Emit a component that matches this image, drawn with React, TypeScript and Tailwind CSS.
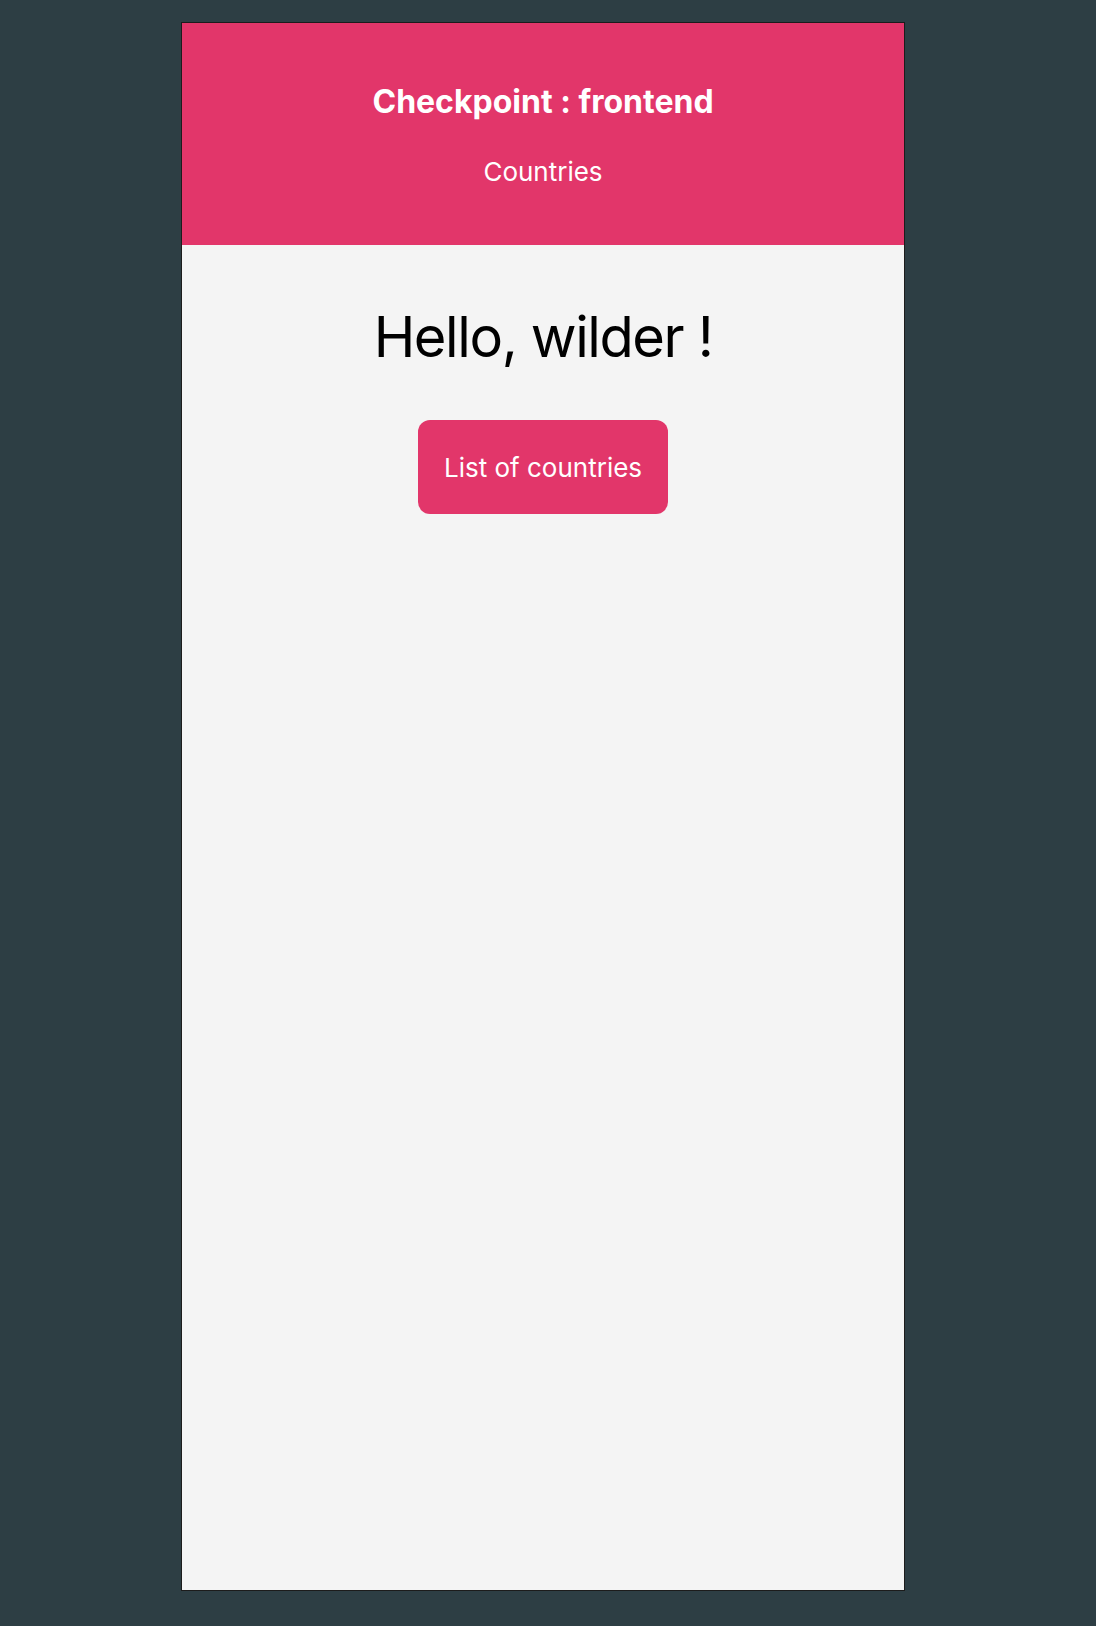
export default function App() {
  return (
    <div
      className="min-h-[1626px] w-full bg-[#2d3e44] pt-[22px]"
      style={{ fontFamily: "Inter, 'Noto Sans', sans-serif" }}
    >
      <div className="ml-[181px] flex h-[1569px] w-[724px] flex-col border border-[#1c1c1c] bg-[#f4f4f4]">
        <header className="flex h-[222px] flex-col items-center bg-[#e2366a] pt-[60px] text-white">
          <h1 className="text-[32px] font-bold leading-[38px]">Checkpoint : frontend</h1>
          <nav className="mt-[36px] text-[26px] leading-[30px]">Countries</nav>
        </header>
        <main className="flex flex-col items-center pt-[57px]">
          <h2 className="text-[56px] leading-[70px] tracking-[-1.4px] text-black">Hello, wilder !</h2>
          <button className="mt-[48px] h-[94px] w-[250px] rounded-xl bg-[#e2366a] text-[26px] text-white">
            List of countries
          </button>
        </main>
      </div>
    </div>
  );
}
